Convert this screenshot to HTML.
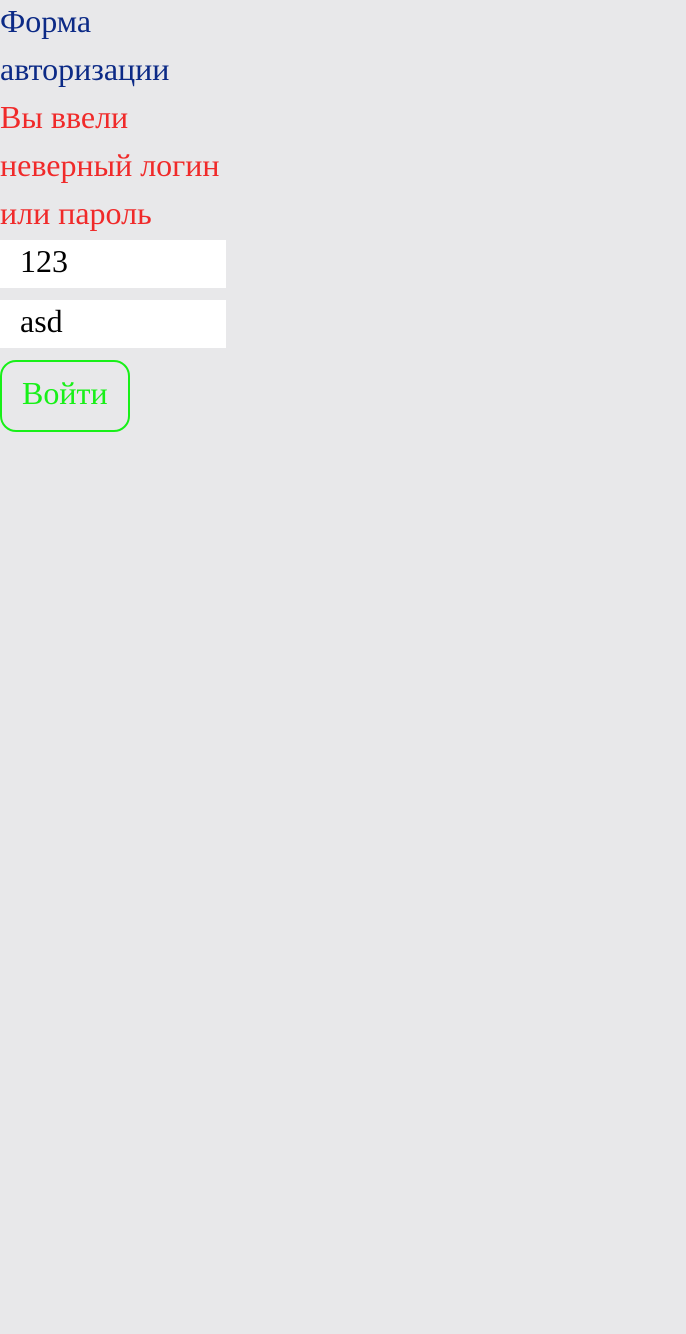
<!DOCTYPE html>
<html><head><meta charset="utf-8"><style>
html,body{margin:0;padding:0;background:#e8e8ea;width:686px;height:1334px;overflow:hidden}
body{font-family:"Liberation Serif",serif;font-size:32px;line-height:48px}
.t{width:226px;position:relative;top:-3px}
.b{color:#0c2a86}
.r{color:#f02a2a}
.i{width:206px;height:48px;background:#fff;padding-left:20px;line-height:42px;color:#000;margin-bottom:12px}
.btn{box-sizing:border-box;width:130px;height:72px;border:2px solid #18f018;border-radius:16px;color:#18f018;padding-left:20px;line-height:62px}
</style></head><body>
<div class="t b">Форма авторизации</div>
<div class="t r">Вы ввели неверный логин или пароль</div>
<div class="i">123</div>
<div class="i">asd</div>
<div class="btn">Войти</div>
</body></html>
